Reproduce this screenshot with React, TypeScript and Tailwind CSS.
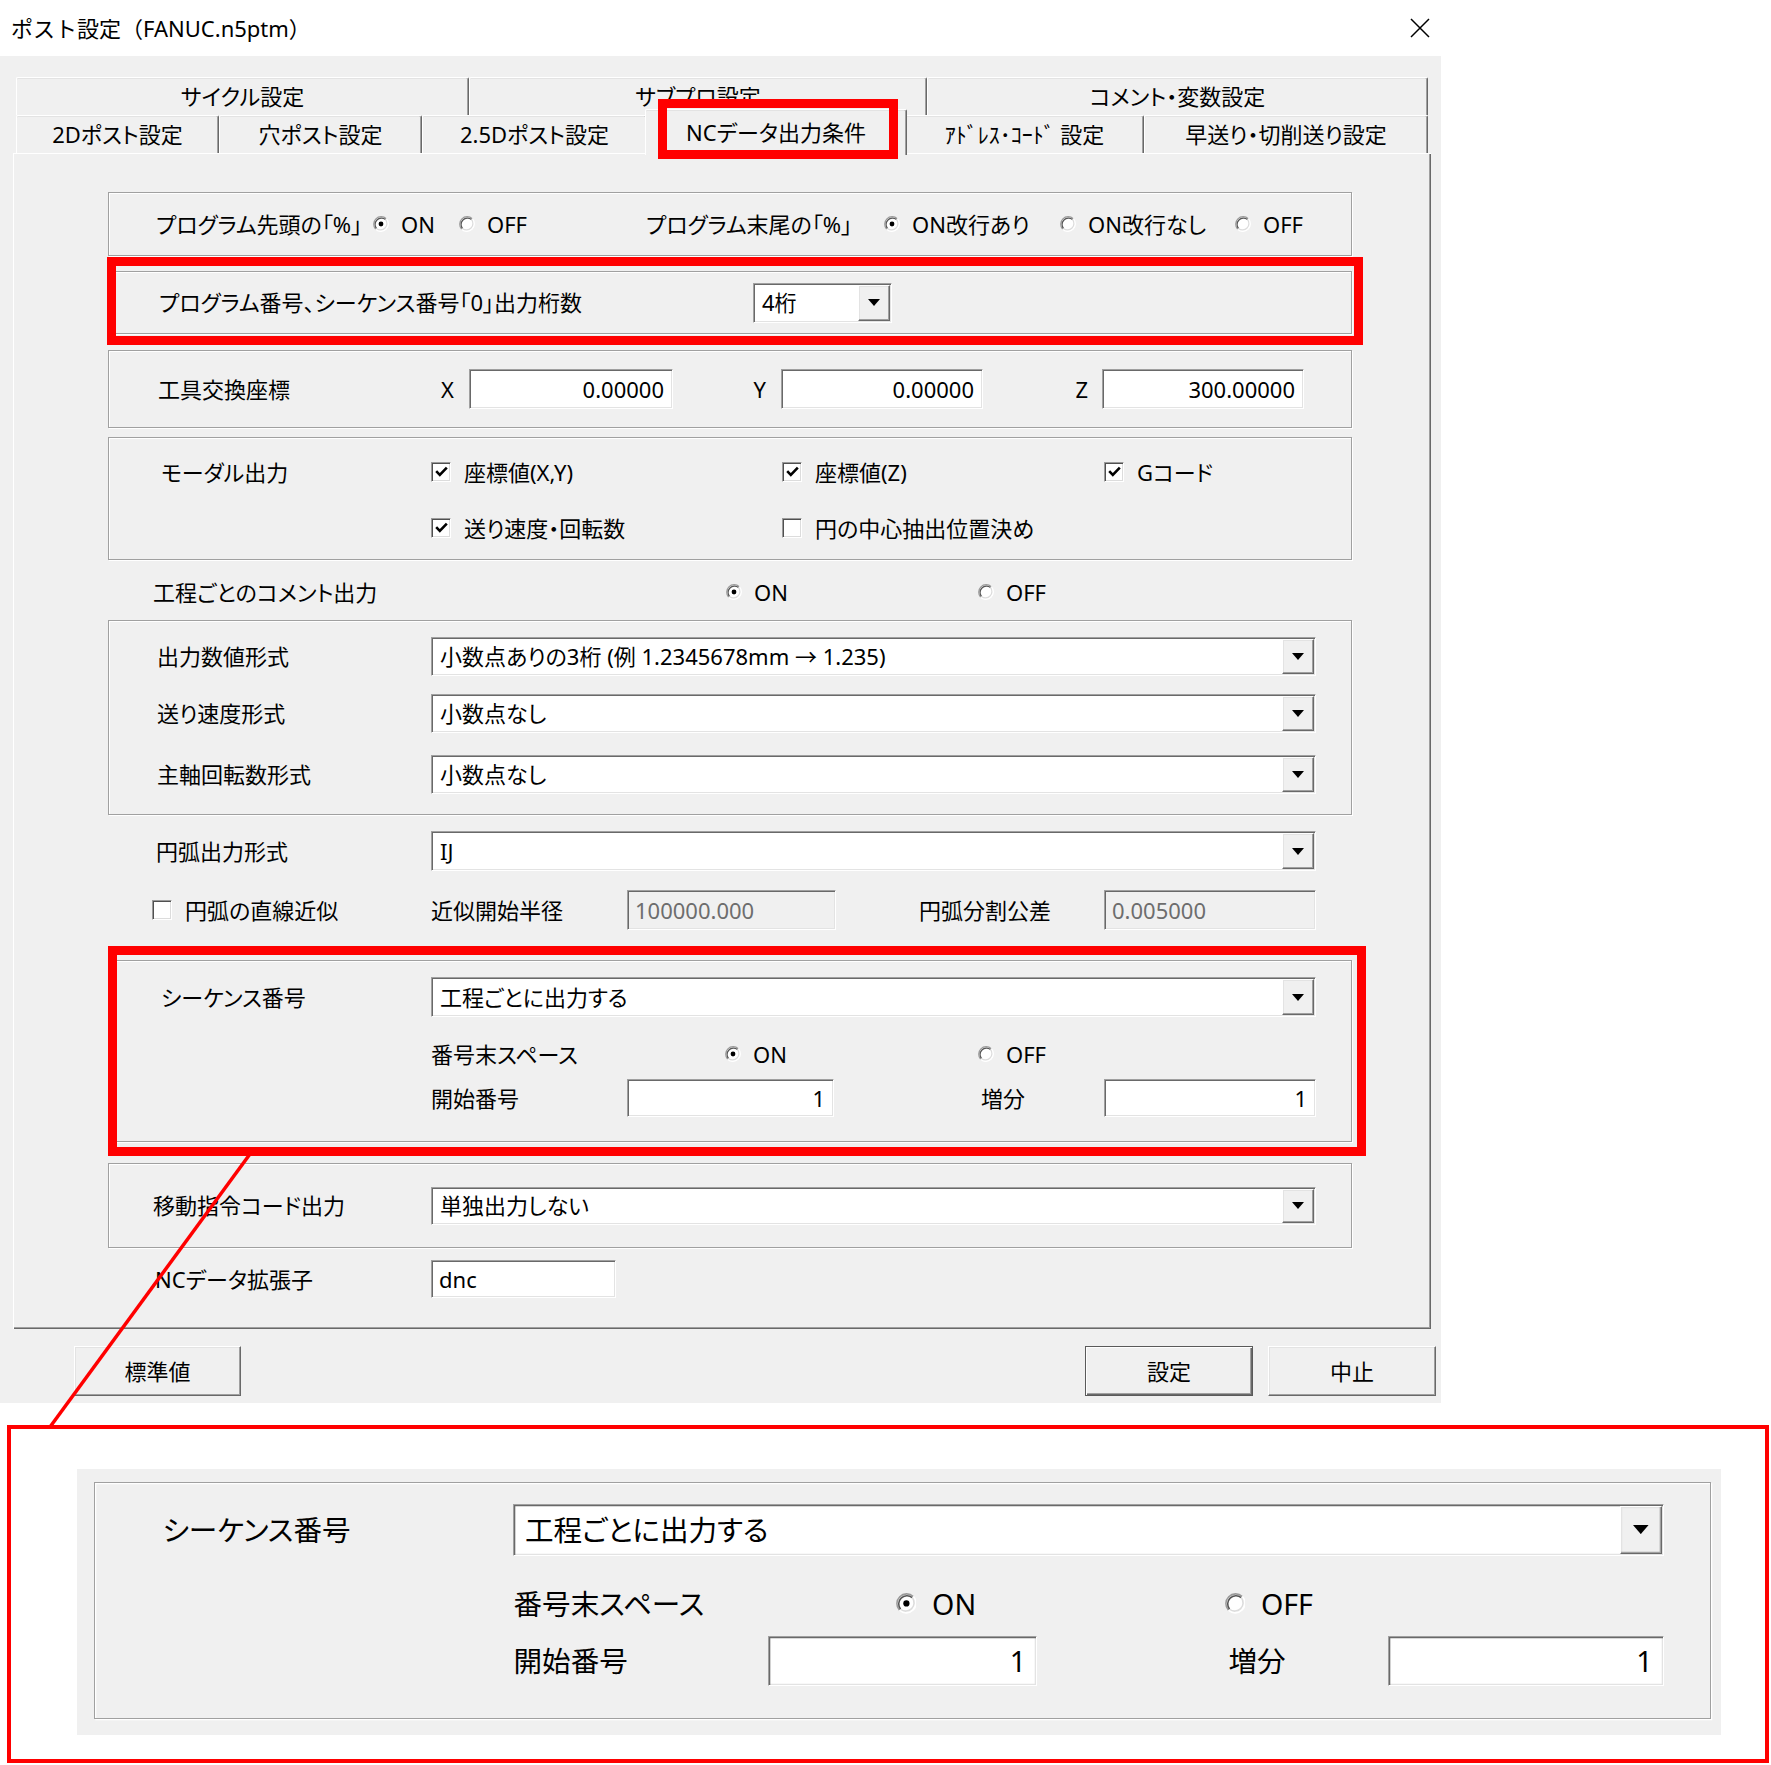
import React from "react";

const SUNKEN =
  "border border-t-[#a0a0a0] border-l-[#a0a0a0] border-r-white border-b-white shadow-[inset_1px_1px_0_#696969,inset_-1px_-1px_0_#e3e3e3]";
const RAISED =
  "border border-t-white border-l-white border-r-[#696969] border-b-[#696969] shadow-[inset_-1px_-1px_0_#a0a0a0,inset_1px_1px_0_#e3e3e3]";
const GROUP = "border border-[#a0a0a0] shadow-[inset_1px_1px_0_#fff,1px_1px_0_#fff]";

function Radio({ checked }: { checked?: boolean }) {
  return (
    <svg width="16" height="16" viewBox="0 0 16 16" className="shrink-0">
      <circle cx="8" cy="8" r="7.5" fill="#fff" />
      <path d="M2.7 13.3 A7.5 7.5 0 0 1 13.3 2.7" fill="none" stroke="#9a9a9a" strokeWidth="1.2" />
      <path d="M3.5 12.5 A6.4 6.4 0 0 1 12.5 3.5" fill="none" stroke="#555" strokeWidth="1.2" />
      <path d="M13.3 2.7 A7.5 7.5 0 0 1 2.7 13.3" fill="none" stroke="#ffffff" strokeWidth="1.2" />
      <path d="M12.5 3.5 A6.4 6.4 0 0 1 3.5 12.5" fill="none" stroke="#dcdcdc" strokeWidth="1.2" />
      {checked && <circle cx="8" cy="8" r="2.4" fill="#000" />}
    </svg>
  );
}

function RadioItem({ checked, label }: { checked?: boolean; label: string }) {
  return (
    <div className="flex items-center gap-[12px] whitespace-nowrap">
      <Radio checked={checked} />
      <span>{label}</span>
    </div>
  );
}

function Check({ checked }: { checked?: boolean }) {
  return (
    <div className="w-[20px] h-[20px] bg-white shrink-0 flex items-center justify-center border border-t-[#9a9a9a] border-l-[#9a9a9a] border-r-white border-b-white shadow-[inset_1px_1px_0_#505050,inset_-1px_-1px_0_#dcdcdc]">
      {checked && (
        <svg width="13" height="11" viewBox="0 0 13 11">
          <path d="M1.2 5.2 L4.8 8.8 L11.8 1.6" fill="none" stroke="#000" strokeWidth="2.6" />
        </svg>
      )}
    </div>
  );
}

function CheckItem({ checked, label }: { checked?: boolean; label: string }) {
  return (
    <div className="flex items-center gap-[13px] whitespace-nowrap">
      <Check checked={checked} />
      <span>{label}</span>
    </div>
  );
}

function Field({
  cls,
  value,
  left,
  disabled,
}: {
  cls: string;
  value: string;
  left?: boolean;
  disabled?: boolean;
}) {
  return (
    <div
      className={`${cls} ${SUNKEN} ${disabled ? "bg-[#f0f0f0] text-[#6d6d6d]" : "bg-white"} flex items-center ${
        left ? "justify-start pl-[7px]" : "justify-end pr-[8px]"
      } shrink-0 whitespace-nowrap`}
    >
      {value}
    </div>
  );
}

function Combo({ cls, text }: { cls: string; text: string }) {
  return (
    <div className={`${cls} ${SUNKEN} bg-white flex shrink-0 p-[1px]`}>
      <div className="flex-1 flex items-center pl-[7px] whitespace-nowrap overflow-hidden">{text}</div>
      <div className={`w-[32px] bg-[#f0f0f0] ${RAISED} flex items-center justify-center`}>
        <svg width="12" height="7" viewBox="0 0 12 7">
          <path d="M0 0H12L6 7Z" fill="#000" />
        </svg>
      </div>
    </div>
  );
}

function Tab({ cls, label }: { cls: string; label: string }) {
  return (
    <div
      className={`${cls} shrink-0 flex items-center justify-center whitespace-nowrap border-t border-l border-t-white border-l-white border-r border-r-[#696969] shadow-[inset_-1px_0_0_#a0a0a0,inset_0_1px_0_#e3e3e3] rounded-t-[2px]`}
    >
      {label}
    </div>
  );
}

function SeqGroup() {
  return (
    <div className={`w-[1244px] h-[182px] shrink-0 ${GROUP} flex flex-col pt-[16px]`}>
      <div className="flex items-center h-[40px]">
        <div className="w-[322px] pl-[52px] shrink-0 whitespace-nowrap">シーケンス番号</div>
        <Combo cls="w-[885px] h-[40px]" text="工程ごとに出力する" />
      </div>
      <div className="flex items-center h-[30px] mt-[22px]">
        <div className="w-[616px] pl-[322px] shrink-0 whitespace-nowrap">番号末スペース</div>
        <div className="w-[253px] shrink-0">
          <RadioItem checked label="ON" />
        </div>
        <RadioItem label="OFF" />
      </div>
      <div className="flex items-center h-[38px] mt-[10px]">
        <div className="w-[518px] pl-[322px] shrink-0 whitespace-nowrap">開始番号</div>
        <Field cls="w-[207px] h-[38px]" value="1" />
        <div className="w-[270px] pl-[147px] shrink-0 whitespace-nowrap">増分</div>
        <Field cls="w-[212px] h-[38px]" value="1" />
      </div>
    </div>
  );
}

export default function App() {
  return (
    <div className="relative w-[1771px] h-[1765px] bg-white text-black text-[22px] leading-[1.2] font-['Noto_Sans','Noto_Sans_CJK_JP',sans-serif] [font-feature-settings:'palt'] overflow-hidden">
      {/* Title bar */}
      <div className="w-[1441px] h-[56px] flex items-center justify-between pl-[11px] pr-[11px]">
        <span className="whitespace-nowrap [font-feature-settings:normal]">ポスト設定（FANUC.n5ptm）</span>
        <svg width="20" height="20" viewBox="0 0 20 20">
          <path d="M1 1 L19 19 M19 1 L1 19" stroke="#000" strokeWidth="1.5" />
        </svg>
      </div>

      {/* Dialog body */}
      <div className="w-[1441px] h-[1347px] bg-[#f0f0f0] flex flex-col">
        {/* Tabs */}
        <div className="mt-[21px] ml-[16px] w-[1412px] flex flex-col">
          <div className="flex h-[38px]">
            <Tab cls="w-[453px] h-[38px]" label="サイクル設定" />
            <Tab cls="w-[458px] h-[38px]" label="サブプロ設定" />
            <Tab cls="w-[501px] h-[38px]" label="コメント・変数設定" />
          </div>
          <div className="flex h-[38px] items-end">
            <Tab cls="w-[203px] h-[38px]" label="2Dポスト設定" />
            <Tab cls="w-[203px] h-[38px]" label="穴ポスト設定" />
            <Tab cls="w-[225px] h-[38px]" label="2.5Dポスト設定" />
            <Tab
              cls="w-[262px] h-[46px] -mx-[2px] -mb-[2px] relative z-10 bg-[#f0f0f0]"
              label="NCデータ出力条件"
            />
            <Tab cls="w-[239px] h-[38px]" label="ｱﾄﾞﾚｽ･ｺｰﾄﾞ 設定" />
            <Tab cls="w-[284px] h-[38px]" label="早送り・切削送り設定" />
          </div>
        </div>

        {/* Panel */}
        <div className="ml-[13px] w-[1418px] h-[1176px] shrink-0 bg-[#f0f0f0] shadow-[inset_1px_1px_0_#fff,inset_-1px_-1px_0_#696969,inset_-2px_-2px_0_#a0a0a0] flex flex-col pl-[95px]">
          {/* G1 */}
          <div className={`mt-[39px] w-[1244px] h-[64px] shrink-0 ${GROUP} flex items-center`}>
            <div className="w-[264px] pl-[47px] shrink-0 whitespace-nowrap">プログラム先頭の「%」</div>
            <div className="w-[86px] shrink-0">
              <RadioItem checked label="ON" />
            </div>
            <div className="w-[187px] shrink-0">
              <RadioItem label="OFF" />
            </div>
            <div className="w-[238px] shrink-0 whitespace-nowrap">プログラム末尾の「%」</div>
            <div className="w-[176px] shrink-0">
              <RadioItem checked label="ON改行あり" />
            </div>
            <div className="w-[175px] shrink-0">
              <RadioItem label="ON改行なし" />
            </div>
            <RadioItem label="OFF" />
          </div>

          {/* G2 */}
          <div className={`mt-[15px] w-[1244px] h-[63px] shrink-0 ${GROUP} flex items-center`}>
            <div className="w-[644px] pl-[50px] shrink-0 whitespace-nowrap">
              プログラム番号、シーケンス番号「0」出力桁数
            </div>
            <Combo cls="w-[139px] h-[40px]" text="4桁" />
          </div>

          {/* G3 */}
          <div className={`mt-[16px] w-[1244px] h-[78px] shrink-0 ${GROUP} flex items-center`}>
            <div className="w-[310px] pl-[49px] shrink-0 whitespace-nowrap">工具交換座標</div>
            <div className="w-[50px] pr-[15px] text-right shrink-0">X</div>
            <Field cls="w-[204px] h-[40px]" value="0.00000" />
            <div className="w-[108px] pr-[15px] text-right shrink-0">Y</div>
            <Field cls="w-[202px] h-[40px]" value="0.00000" />
            <div className="w-[119px] pr-[14px] text-right shrink-0">Z</div>
            <Field cls="w-[202px] h-[40px]" value="300.00000" />
          </div>

          {/* G4 */}
          <div className={`mt-[9px] w-[1244px] h-[123px] shrink-0 ${GROUP} flex flex-col pt-[14px]`}>
            <div className="flex items-center h-[40px]">
              <div className="w-[322px] pl-[52px] shrink-0 whitespace-nowrap">モーダル出力</div>
              <div className="w-[351px] shrink-0">
                <CheckItem checked label="座標値(X,Y)" />
              </div>
              <div className="w-[322px] shrink-0">
                <CheckItem checked label="座標値(Z)" />
              </div>
              <CheckItem checked label="Gコード" />
            </div>
            <div className="flex items-center h-[40px] mt-[16px]">
              <div className="w-[322px] shrink-0" />
              <div className="w-[351px] shrink-0">
                <CheckItem checked label="送り速度・回転数" />
              </div>
              <CheckItem label="円の中心抽出位置決め" />
            </div>
          </div>

          {/* 工程ごとのコメント出力 */}
          <div className="mt-[12px] w-[1244px] h-[40px] shrink-0 flex items-center">
            <div className="w-[618px] pl-[45px] shrink-0 whitespace-nowrap">工程ごとのコメント出力</div>
            <div className="w-[252px] shrink-0">
              <RadioItem checked label="ON" />
            </div>
            <RadioItem label="OFF" />
          </div>

          {/* G5 */}
          <div className={`mt-[8px] w-[1244px] h-[195px] shrink-0 ${GROUP} flex flex-col pt-[16px]`}>
            <div className="flex items-center h-[39px]">
              <div className="w-[322px] pl-[48px] shrink-0 whitespace-nowrap">出力数値形式</div>
              <Combo cls="w-[885px] h-[39px]" text="小数点ありの3桁 (例 1.2345678mm → 1.235)" />
            </div>
            <div className="flex items-center h-[39px] mt-[18px]">
              <div className="w-[322px] pl-[48px] shrink-0 whitespace-nowrap">送り速度形式</div>
              <Combo cls="w-[885px] h-[39px]" text="小数点なし" />
            </div>
            <div className="flex items-center h-[39px] mt-[22px]">
              <div className="w-[322px] pl-[48px] shrink-0 whitespace-nowrap">主軸回転数形式</div>
              <Combo cls="w-[885px] h-[39px]" text="小数点なし" />
            </div>
          </div>

          {/* 円弧出力形式 */}
          <div className="mt-[16px] w-[1244px] h-[40px] shrink-0 flex items-center">
            <div className="w-[323px] pl-[48px] shrink-0 whitespace-nowrap">円弧出力形式</div>
            <Combo cls="w-[885px] h-[40px]" text="IJ" />
          </div>

          {/* 円弧の直線近似 */}
          <div className="mt-[19px] w-[1244px] h-[40px] shrink-0 flex items-center">
            <div className="w-[323px] pl-[44px] shrink-0">
              <CheckItem label="円弧の直線近似" />
            </div>
            <div className="w-[196px] shrink-0 whitespace-nowrap">近似開始半径</div>
            <Field cls="w-[209px] h-[40px]" value="100000.000" left disabled />
            <div className="w-[268px] pl-[83px] shrink-0 whitespace-nowrap">円弧分割公差</div>
            <Field cls="w-[212px] h-[40px]" value="0.005000" left disabled />
          </div>

          {/* G6 */}
          <div className="mt-[30px]">
            <SeqGroup />
          </div>

          {/* G7 */}
          <div className={`mt-[21px] w-[1244px] h-[85px] shrink-0 ${GROUP} flex items-center`}>
            <div className="w-[322px] pl-[44px] shrink-0 whitespace-nowrap">移動指令コード出力</div>
            <Combo cls="w-[885px] h-[38px]" text="単独出力しない" />
          </div>

          {/* NCデータ拡張子 */}
          <div className="mt-[12px] w-[1244px] h-[38px] shrink-0 flex items-center">
            <div className="w-[323px] pl-[47px] shrink-0 whitespace-nowrap">NCデータ拡張子</div>
            <Field cls="w-[185px] h-[38px]" value="dnc" left />
          </div>
        </div>

        {/* Buttons */}
        <div className="mt-[17px] flex items-center">
          <div className={`ml-[74px] w-[167px] h-[50px] ${RAISED} flex items-center justify-center`}>標準値</div>
          <div className="ml-[844px] w-[168px] h-[50px] border border-[#5a5a5a] shadow-[inset_1px_1px_0_#fff,inset_-1px_-1px_0_#696969,inset_-2px_-2px_0_#a0a0a0] flex items-center justify-center">
            設定
          </div>
          <div className={`ml-[15px] w-[168px] h-[50px] ${RAISED} flex items-center justify-center`}>中止</div>
        </div>
      </div>

      {/* Enlarged inset */}
      <div className="mt-[22px] ml-[7px] w-[1762px] h-[338px] border-4 border-[#ff0000] pl-[66px] pt-[40px]">
        <div className="w-[1644px] h-[266px] bg-[#f0f0f0]">
          <div className="[zoom:1.3] pl-[13px] pt-[10px]">
            <SeqGroup />
          </div>
        </div>
      </div>

      {/* Annotation overlays */}
      <div className="absolute z-20 left-[658px] top-[99px] w-[240px] h-[60px] border-[9px] border-[#ff0000] pointer-events-none" />
      <div className="absolute z-20 left-[107px] top-[257px] w-[1256px] h-[88px] border-[9px] border-[#ff0000] pointer-events-none" />
      <div className="absolute z-20 left-[108px] top-[946px] w-[1258px] h-[210px] border-[9px] border-[#ff0000] pointer-events-none" />
      <svg
        className="absolute z-20 left-0 top-0 pointer-events-none"
        width="1771"
        height="1765"
        viewBox="0 0 1771 1765"
      >
        <line x1="250" y1="1154" x2="50" y2="1427" stroke="#ff0000" strokeWidth="3.5" />
      </svg>
    </div>
  );
}
